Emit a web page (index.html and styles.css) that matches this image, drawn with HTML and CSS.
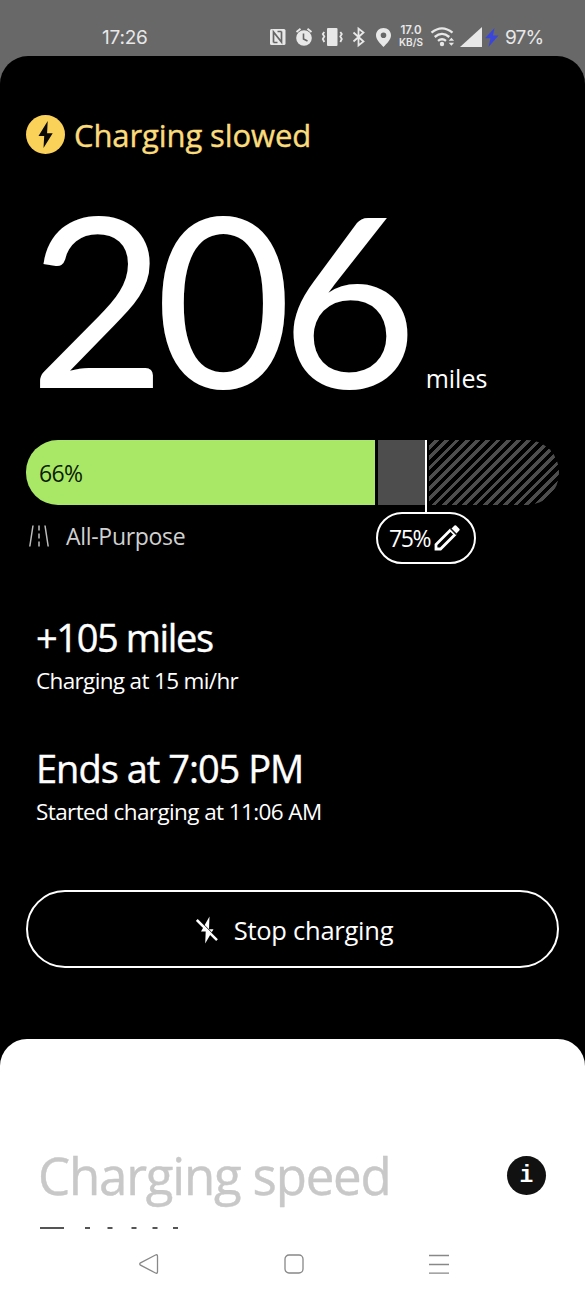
FILE: index.html
```html
<!DOCTYPE html>
<html lang="en">
<head>
<meta charset="utf-8">
<title>Charging</title>
<link rel="stylesheet" href="styles.css">
</head>
<body>
<div class="phone">
  <header class="status">
    <span class="clock">17:26</span>
    <svg class="status-icons" width="123" height="24" viewBox="0 0 123 24" fill="#e8e8e8">
      <rect x="0" y="4" width="15.500" height="16" rx="1.500"/>
      <path d="M3.500 17.500V7l8 10V6.500M7.500 6.500h4M3.500 17.500h4" fill="none" stroke="#666" stroke-width="1.700"/>
      <circle cx="34" cy="13" r="7.800"/>
      <path d="M26.500 7l4-3.300M41.500 7l-4-3.300" stroke="#e8e8e8" stroke-width="1.800"/>
      <path d="M33.500 8.500V14l4 2" fill="none" stroke="#666" stroke-width="1.600"/>
      <rect x="57" y="3" width="10.500" height="18" rx="1"/>
      <path d="M54.300 7l-1.500 2 1.500 2.500-1.500 2.500 1.500 3M70.300 7l1.500 2-1.500 2.500 1.500 2.500-1.500 3" fill="none" stroke="#e8e8e8" stroke-width="1.800"/>
      <path d="M83.500 7.500l10 9-5 4V3.500l5 4-10 9" fill="none" stroke="#e8e8e8" stroke-width="1.800"/>
      <path fill-rule="evenodd" d="M113.500 3c-4.300 0-7.500 3.200-7.500 7.300 0 4.700 4.300 8.200 7.500 11.700 3.200-3.500 7.500-7 7.500-11.700 0-4.100-3.200-7.300-7.500-7.300zm0 4.500a2.800 2.800 0 1 1 0 5.600 2.800 2.800 0 0 1 0-5.600z"/>
    </svg>
    <span class="rate"><span class="rate-value">17.0</span><span>KB/S</span></span>
    <svg class="signal" width="70" height="24" viewBox="0 0 70 24" fill="#e8e8e8">
      <path d="M1.500 7.700Q12-1 22.500 7.700M4.700 12Q12 5.800 19.300 12M8 15.800Q12 12.600 16 15.800" fill="none" stroke="#e8e8e8" stroke-width="2.300"/>
      <circle cx="12" cy="19" r="2.200"/>
      <path d="M18.700 15.800l2.700-3 2.700 3zM18.700 17.800l2.700 3 2.700-3z"/>
      <path d="M52 2v20H30z"/>
      <path fill="#3a45dc" d="M64.500 3L55 13.300h5.500L58.500 22l10-11.500h-5.500z"/>
    </svg>
    <span class="battery">97%</span>
  </header>

  <main class="panel">
    <h1 class="alert">
      <svg width="39" height="39" viewBox="0 0 39 39">
        <circle cx="19.500" cy="19.500" r="19.500" fill="#fbd259"/>
        <path fill="#0b0a04" d="M21.700 6L12.500 21h5.700l-.7 12L26.700 18.300h-5.600z"/>
      </svg>
      <span>Charging slowed</span>
    </h1>

    <div class="range"><span class="range-value">206</span><span class="range-unit">miles</span></div>

    <div class="bar">
      <div class="bar-charged"><span>66%</span></div>
      <div class="bar-pending"></div>
      <div class="bar-limit"></div>
      <div class="bar-rest"></div>
    </div>

    <div class="below">
      <div class="mode">
        <svg width="20" height="22" viewBox="0 0 20 22" fill="none" stroke="#bdbdbd" stroke-width="1.500">
          <path d="M4 .5L.8 21.500M16 .5l3.200 21M10 .5v5M10 8.500v5M10 16.500v5"/>
        </svg>
        <span>All-Purpose</span>
      </div>
      <div class="limit">
        <span>75%</span>
        <svg width="26" height="26" viewBox="0 0 26 26" fill="none" stroke="#fff" stroke-width="2.800">
          <path d="M2 24v-4.500L16.500 5l4.500 4.500L6.500 24z"/>
          <path fill="#fff" stroke="none" d="M17.500 3.500L20.500.6q.8-.7 1.600 0l3.200 3.200q.8.800 0 1.600L22.500 8.500z"/>
          <path stroke="#000" stroke-width="1.200" d="M16.200 3.400l6.400 6.400"/>
        </svg>
      </div>
    </div>

    <section class="stat">
      <h2 class="added">+105 miles</h2>
      <p class="speed">Charging at 15 mi/hr</p>
    </section>
    <section class="stat stat-end">
      <h2 class="ends">Ends at 7:05 PM</h2>
      <p class="started">Started charging at 11:06 AM</p>
    </section>

    <button class="stop">
      <svg width="22" height="28" viewBox="0 0 22 28" fill="#fff">
        <path d="M13.500.5L5 15.500h4.700L9.200 27.500 17.500 13.300H13z"/>
        <path d="M2 2.800L21.500 22.300" stroke="#000" stroke-width="1"/>
        <path d="M.8 4L21 24.200" stroke="#fff" stroke-width="2.500"/>
      </svg>
      <span>Stop charging</span>
    </button>
  </main>

  <section class="sheet">
    <div class="sheet-head">
      <h2>Charging speed</h2>
      <span class="info">i</span>
    </div>
    <svg class="clipped" width="140" height="2" viewBox="0 0 140 2" fill="#555">
      <path d="M0 0h24v2H0zM45 0h5v2h-5zM67.500 0h5v2h-5zM91.500 0h5v2h-5zM112.500 0h5v2h-5zM133 0h5v2h-5z"/>
    </svg>
    <nav class="nav">
      <svg width="20" height="20" viewBox="0 0 20 20"><path d="M1.500 8.800L16.500 1q2-.8 2 1.200v15.600q0 2-2 1.200L1.500 11.200q-1.500-1.200 0-2.400z"/></svg>
      <svg width="20" height="20" viewBox="0 0 20 20"><rect x="1" y="1" width="18" height="18" rx="4"/></svg>
      <svg width="20" height="20" viewBox="0 0 20 20"><path d="M0 1.500h20M0 10.500h20M0 19.200h20"/></svg>
    </nav>
  </section>
</div>
</body>
</html>
```
FILE: styles.css
```css
* { box-sizing: border-box; margin: 0; padding: 0; }
body { background: #000; color: #fff; font-family: "Open Sans", sans-serif; }
h1, h2 { font-weight: 400; -webkit-text-stroke: 0.4px currentColor; }
svg { display: block; flex: none; }
.phone { width: 585px; height: 1300px; overflow: hidden; background: linear-gradient(#686868 200px, #000 200px); display: flex; flex-direction: column; white-space: nowrap; }

.status { height: 56px; padding: 19px 0 0 102px; display: flex; align-items: flex-start; color: #e8e8e8; font-family: Inter, sans-serif; }
.clock { width: 168px; font-size: 19px; line-height: 38px; letter-spacing: -0.2px; }
.rate { display: flex; flex-direction: column; width: 24px; margin: 6px 7px 0 6px; font-size: 10px; font-weight: 600; line-height: 12px; text-align: center; }
.rate-value { font-size: 11.500px; height: 11px; line-height: 11px; }
.rate, .clock, .battery { flex: none; }
.status-icons, .signal { margin-top: 6px; }
.battery { margin-left: 5px; font-size: 19px; line-height: 38px; letter-spacing: -0.8px; }

.panel { height: 983px; flex: none; background: #000; border-radius: 28px 28px 0 0; padding: 59px 26px 0; }
.alert { display: flex; gap: 9px; height: 39px; font-size: 31px; line-height: 41px; color: #fbdc7c; letter-spacing: -0.1px; }
.range { display: flex; align-items: baseline; height: 200px; margin: 43px 0 43px; padding-left: 3px; }
.range-value { font-family: Lato, sans-serif; font-size: 236px; line-height: 200px; letter-spacing: -11px; }
.range-unit { font-size: 25px; line-height: 30px; margin-left: 19px; }

.bar { display: flex; height: 65px; }
.bar-charged { width: 349px; border-radius: 32px 0 0 32px; background: #a9e867; color: #0c1c05; padding-left: 13px; font-size: 23px; line-height: 67px; letter-spacing: -0.7px; }
.bar-pending { width: 47px; margin-left: 3px; background: #4d4d4d; }
.bar-limit { width: 2px; height: 73px; background: #fff; }
.bar-rest { flex: 1; margin-left: 2px; border-radius: 0 32px 32px 0; background: repeating-linear-gradient(135deg, #000 0 4px, #4d4d4d 4px 7.250px); }

.below { display: flex; height: 58px; padding-top: 7px; }
.mode { display: flex; align-items: center; width: 350px; height: 48px; gap: 17px; padding-left: 3px; font-size: 23px; letter-spacing: -0.3px; color: #d0d0d0; }
.limit { display: flex; align-items: center; width: 100px; height: 52px; gap: 4px; padding-left: 11px; border: 2px solid #fff; border-radius: 26px; background: #000; font-size: 23px; letter-spacing: -1.400px; }

.stat { padding: 52px 0 0 10px; }
.stat h2 { height: 51px; font-size: 38px; line-height: 44px; }
.stat p { height: 30px; font-size: 22.500px; line-height: 30px; }
.stat .added { letter-spacing: -1.400px; }
.stat .ends { letter-spacing: -1px; }
.stat .speed { letter-spacing: -0.650px; }
.stat .started { letter-spacing: -0.600px; }
.stat-end { padding-top: 50px; }

.stop { display: flex; align-items: center; justify-content: center; gap: 16px; width: 533px; height: 78px; margin-top: 63px; padding: 1px 0 0 4px; background: #000; border: 2px solid #fff; border-radius: 39px; color: #fff; font: 25.500px/40px "Open Sans", sans-serif; letter-spacing: -0.250px; }

.sheet { flex: 1; color: #c8c8c8; background: #fff; border-radius: 27px 27px 0 0; padding-top: 106px; }
.sheet-head { display: flex; align-items: center; justify-content: space-between; height: 60px; padding: 0 39px 0 38px; }
.sheet-head h2 { font-size: 51px; line-height: 60px; letter-spacing: -1.200px; }
.info { width: 39px; height: 39px; border-radius: 50%; background: #111; color: #fff; font: bold 23px/41px "Liberation Mono", monospace; text-align: center; }
.clipped { margin: 22px 0 0 40px; }
.nav { display: flex; gap: 125px; margin-top: 25px; padding-left: 139px; fill: none; stroke: #888; stroke-width: 1.300; }
```
